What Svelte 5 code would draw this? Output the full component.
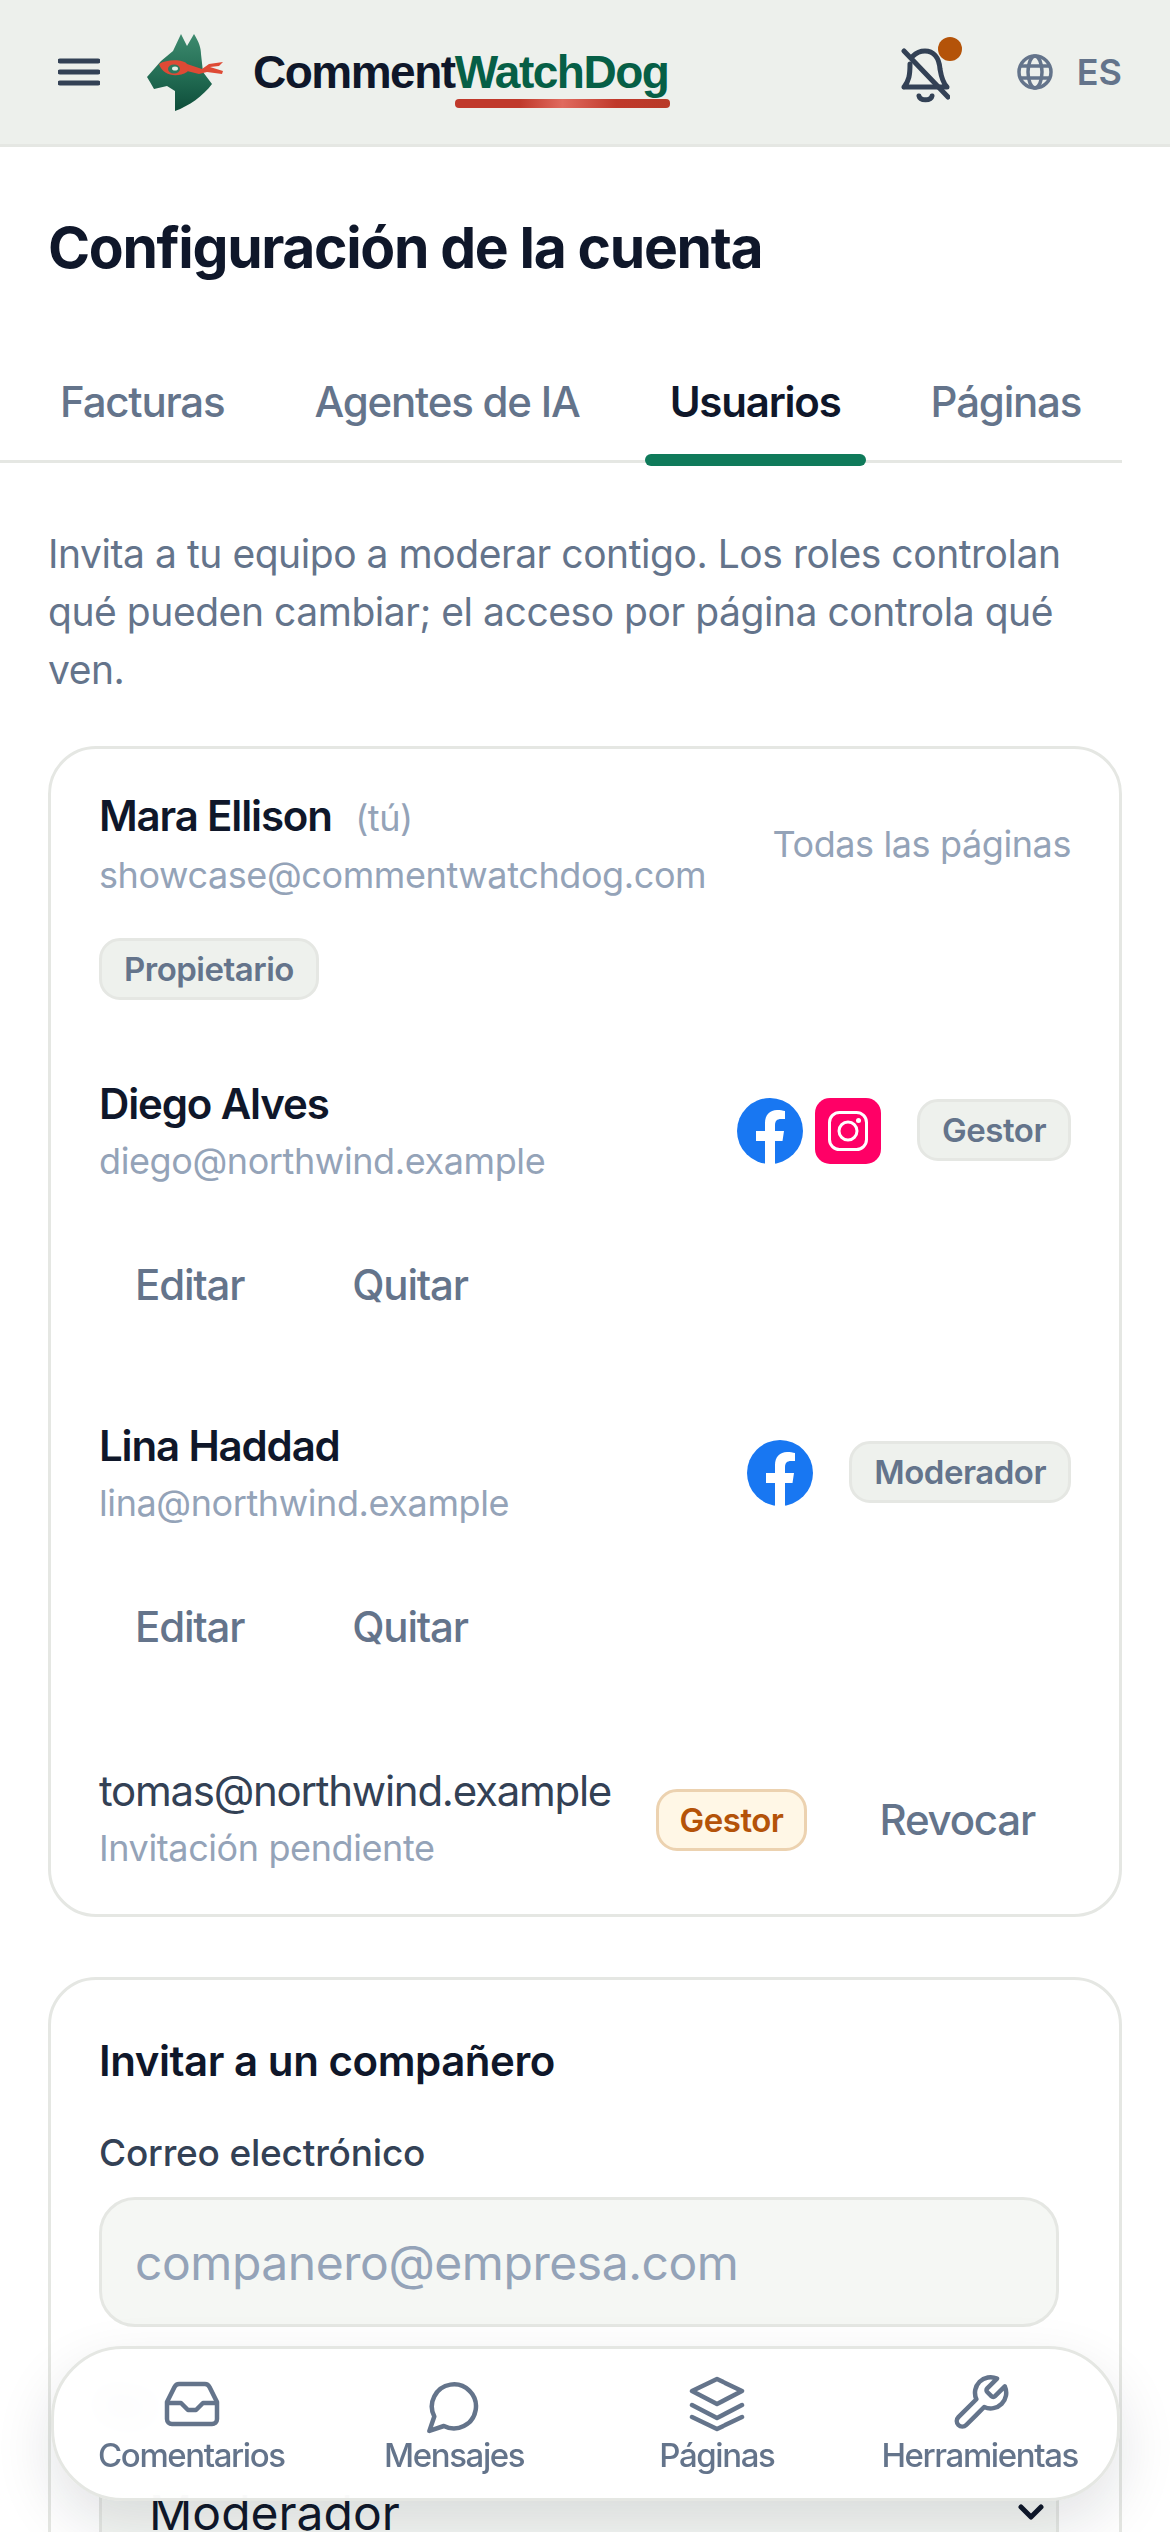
<script>
  const tabs = ['Facturas', 'Agentes de IA', 'Usuarios', 'Páginas']
  const members = [
    { name: 'Diego Alves', email: 'diego@northwind.example', pages: ['fb', 'ig'], role: 'Gestor' },
    { name: 'Lina Haddad', email: 'lina@northwind.example', pages: ['fb'], role: 'Moderador' }
  ]
  const nav = ['Comentarios', 'Mensajes', 'Páginas', 'Herramientas']
</script>

{#snippet fb()}
  <svg class="page-icon" viewBox="0 0 66 66">
    <circle cx="33" cy="33" r="33" fill="#1877f2"/>
    <path d="M28 66V43h-9V33h9v-8c0-8 5-13 12-13 3 0 6 .5 8 1v8h-4c-4 0-6 2-6 6v6h9l-1.500 10H38v23z" fill="#fff"/>
  </svg>
{/snippet}

{#snippet ig()}
  <svg class="page-icon" viewBox="0 0 66 66">
    <rect width="66" height="66" rx="15" fill="#ff0066"/>
    <rect x="14.500" y="14.500" width="37" height="37" rx="10" fill="none" stroke="#fff" stroke-width="3"/>
    <circle cx="33" cy="33" r="9" fill="none" stroke="#fff" stroke-width="3"/>
    <circle cx="43.500" cy="22.500" r="2.500" fill="#fff"/>
  </svg>
{/snippet}

<div class="page">
  <header>
    <button class="menu" aria-label="Menú">
      <svg viewBox="0 0 42 28" width="42" height="28"><path d="M2 3h38M2 14h38M2 25h38" stroke="#334155" stroke-width="5" stroke-linecap="round"/></svg>
    </button>
    <svg class="dog" viewBox="0 0 78 77" width="78" height="77">
      <defs>
        <linearGradient id="dogfill" x1="0" y1="0" x2="0" y2="1">
          <stop offset="0" stop-color="#3d8a6e"/><stop offset="0.55" stop-color="#226c53"/><stop offset="1" stop-color="#0e4d3a"/>
        </linearGradient>
      </defs>
      <path d="M0 43 14 27 26 17 34 0l6 12 7-12c5 8 7 14 7 20l2 18 9 12C56 62 42 72 28 77V57l-8-5-13 3-4-7z" fill="url(#dogfill)"/>
      <path d="M40 30 55 35l7-5 14-2-4 4-9 1 13 4-1 3-15-2-8 2-12-3z" fill="#de4a35"/>
      <path d="M12 30c8-5 24-5 28 0 2 4 2 6 0 8-10 6-24 4-28-8z" fill="#de4a35"/>
      <ellipse cx="27" cy="35" rx="6" ry="4.500" fill="#2c7a5f"/>
      <ellipse cx="28" cy="34.500" rx="3" ry="2" fill="#dfeee5"/>
    </svg>
    <div class="brand">
      <span class="word"><span class="comment">Comment</span><span class="watch">WatchDog</span></span>
    </div>
    <div class="spacer"></div>
    <span class="bell">
      <svg viewBox="0 0 50 58" width="50" height="58" fill="none" stroke="#334155" stroke-width="5" stroke-linecap="round" stroke-linejoin="round">
        <path d="M4 40H47C42 35 41 28 40 22 39 10 33 4 25 4 20 4 16 6 13 9M10 17C10 28 9 34 4 40"/>
        <path d="M4 4 48 50"/>
        <path d="M19 49C20 54 31 54 32 49"/>
      </svg>
      <i class="dot"></i>
    </span>
    <svg class="globe" viewBox="0 0 36 36" width="36" height="36" fill="none" stroke="#64748b" stroke-width="3.500">
      <circle cx="18" cy="18" r="16"/>
      <ellipse cx="18" cy="18" rx="7" ry="16"/>
      <path d="M4 12h28M4 24h28"/>
    </svg>
    <span class="lang">ES</span>
  </header>

  <main>
    <h1>Configuración de la cuenta</h1>

    <nav class="tabs">
      {#each tabs as tab}
        <span class="tab" class:active={tab === 'Usuarios'}>{tab}</span>
      {/each}
    </nav>

    <p class="intro">Invita a tu equipo a moderar contigo. Los roles controlan qué pueden cambiar; el acceso por página controla qué ven.</p>

    <section class="card users">
      <div class="owner">
        <div class="owner-top">
          <div>
            <div class="name">Mara Ellison <span class="you">(tú)</span></div>
            <div class="mail">showcase@commentwatchdog.com</div>
          </div>
          <span class="all">Todas las páginas</span>
        </div>
        <span class="badge">Propietario</span>
      </div>

      {#each members as m}
        <div class="member">
          <div class="member-top">
            <div class="who">
              <div class="name">{m.name}</div>
              <div class="mail">{m.email}</div>
            </div>
            <div class="pages">
              {#each m.pages as p}
                {#if p === 'fb'}{@render fb()}{:else}{@render ig()}{/if}
              {/each}
            </div>
            <span class="badge">{m.role}</span>
          </div>
          <div class="actions">
            <button>Editar</button>
            <button>Quitar</button>
          </div>
        </div>
      {/each}

      <div class="pending">
        <div class="who">
          <div class="pending-mail">tomas@northwind.example</div>
          <div class="mail">Invitación pendiente</div>
        </div>
        <span class="badge warn">Gestor</span>
        <button>Revocar</button>
      </div>
    </section>

    <section class="card invite">
      <h2>Invitar a un compañero</h2>
      <label for="mail">Correo electrónico</label>
      <input id="mail" placeholder="companero@empresa.com">
      <div class="field-label">Rol</div>
      <div class="select">
        <span>Moderador</span>
        <svg viewBox="0 0 26 18" width="26" height="18" fill="none" stroke="#0f172a" stroke-width="5" stroke-linecap="round" stroke-linejoin="round"><path d="M3 4l10 10 10-10"/></svg>
      </div>
    </section>
  </main>

  <nav class="bottom">
    {#each nav as item, i}
      <div class="nav-item">
        <svg viewBox="0 0 62 62" width="62" height="62" fill="none" stroke="#64748b" stroke-width="4.500" stroke-linecap="round" stroke-linejoin="round">
          {#if i === 0}
            <g transform="translate(5 9)">
              <path d="M14 2h26c2 0 3.500 1 4.500 3L52 20v17a5 5 0 0 1-5 5H7a5 5 0 0 1-5-5V20L9.500 5C10.500 3 12 2 14 2z"/>
              <path d="M3 21H16l7 7h8l7-7H51"/>
            </g>
          {:else if i === 1}
            <path transform="translate(1.500 4) scale(2.450)" stroke-width="1.840" d="M7.900 20A9 9 0 1 0 4 16.100L2 22Z"/>
          {:else if i === 2}
            <g transform="translate(4 4)">
              <path d="M27 2 52 14 27 27 2 14z"/>
              <path d="M2 28 27 41 52 28"/>
              <path d="M2 40 27 52 52 40"/>
            </g>
          {:else}
            <path transform="translate(0 -1) scale(2.600)" stroke-width="1.730" d="M14.700 6.300a1 1 0 0 0 0 1.400l1.600 1.600a1 1 0 0 0 1.400 0l3.770-3.770a6 6 0 0 1-7.940 7.940l-6.910 6.910a2.120 2.120 0 0 1-3-3l6.910-6.910a6 6 0 0 1 7.940-7.940l-3.760 3.760z"/>
          {/if}
        </svg>
        <span>{item}</span>
      </div>
    {/each}
  </nav>
</div>

<style>
  :global(body) {
    background: #fff;
    font-family: Inter, "Noto Sans", sans-serif;
  }

  .page {
    height: 2532px;
    overflow: hidden;
    color: #0f172a;
  }

  button {
    font: inherit;
    background: none;
    border: 0;
    color: #64748b;
    font-size: 42px;
    font-weight: 500;
    letter-spacing: -1.200px;
    padding: 0 36px;
    cursor: pointer;
  }

  header {
    display: flex;
    align-items: center;
    height: 144px;
    padding: 0 48px;
    background: #edf0ec;
    border-bottom: 3px solid #e5e7e3;
  }

  .menu {
    display: flex;
    padding: 0 10px;
  }

  .dog { margin-left: 37px; }

  .brand {
    margin-left: 28px;
    display: flex;
    align-items: center;
  }

  .word {
    font-family: "Liberation Sans", Arial, sans-serif;
    font-weight: 700;
    font-size: 46px;
    letter-spacing: -1.500px;
  }

  .comment { color: #0f172a; }

  .watch {
    color: #065f46;
    position: relative;
    display: inline-block;
  }

  .watch::after {
    content: '';
    position: absolute;
    left: 0;
    right: -2px;
    bottom: -9px;
    height: 9px;
    border-radius: 4px;
    background: linear-gradient(90deg, #c0392b, #c0392b 30%, #e06a5e 50%, #c0392b 75%, #b83a28);
  }

  .spacer { flex: 1; }

  .bell {
    position: relative;
    display: flex;
    margin-right: 67px;
    margin-top: 8px;
  }

  .dot {
    position: absolute;
    top: -10px;
    right: -12px;
    width: 24px;
    height: 24px;
    border-radius: 50%;
    background: #b45309;
  }

  .lang {
    margin-left: 24px;
    font-size: 36px;
    font-weight: 600;
    color: #64748b;
  }

  main { padding-top: 65px; }

  h1 {
    margin: 0 48px;
    font-size: 57px;
    font-weight: 700;
    line-height: 72px;
    letter-spacing: -1.350px;
  }

  .tabs {
    display: flex;
    gap: 66px;
    margin: 76px 48px 0 0;
    padding-left: 48px;
    border-bottom: 3px solid #e5e7e3;
  }

  .tab {
    position: relative;
    padding: 0 12px;
    height: 100px;
    line-height: 84px;
    font-size: 42px;
    font-weight: 500;
    letter-spacing: -1.200px;
    color: #64748b;
    white-space: nowrap;
  }

  .tab.active {
    color: #0f172a;
    font-weight: 600;
  }

  .tab.active::after {
    content: '';
    position: absolute;
    left: -13px;
    right: -13px;
    bottom: -6px;
    height: 12px;
    border-radius: 6px;
    background: #0f7a5a;
  }

  .intro {
    margin: 62px 48px 47px;
    font-size: 39px;
    line-height: 58px;
    letter-spacing: -0.450px;
    color: #64748b;
  }

  .card {
    margin: 0 48px;
    border: 3px solid #e5e7e3;
    border-radius: 48px;
    background: #fff;
    padding: 0 48px;
  }

  .users { padding: 40px 48px 39px; }

  .owner-top, .member-top, .pending {
    display: flex;
    align-items: center;
  }

  .owner-top { justify-content: space-between; }

  .name {
    font-size: 42px;
    font-weight: 600;
    line-height: 54px;
    letter-spacing: -1.150px;
    color: #0f172a;
  }

  .you {
    margin-left: 14px;
    font-size: 36px;
    font-weight: 400;
    letter-spacing: -0.500px;
    color: #94a3b8;
  }

  .mail {
    margin-top: 3px;
    font-size: 36px;
    line-height: 54px;
    letter-spacing: -0.400px;
    color: #94a3b8;
  }

  .all {
    margin-bottom: 3px;
    font-size: 36px;
    letter-spacing: -0.400px;
    color: #94a3b8;
  }

  .badge {
    display: inline-block;
    box-sizing: border-box;
    height: 62px;
    line-height: 56px;
    padding: 0 22px;
    border: 3px solid #e5e7e3;
    border-radius: 21px;
    background: #eef1ed;
    color: #64748b;
    font-size: 33px;
    font-weight: 600;
    letter-spacing: -0.500px;
  }

  .owner .badge { margin-top: 36px; }

  .member { margin-top: 77px; }
  .member + .member { margin-top: 107px; }

  .who { flex: 1; }

  .pages {
    display: flex;
    gap: 12px;
    margin-right: 36px;
    margin-bottom: 4px;
  }

  .member-top .badge { margin-bottom: 6px; }

  .page-icon { width: 66px; height: 66px; display: block; }

  .actions {
    display: flex;
    gap: 36px;
    margin-top: 70px;
    line-height: 54px;
  }

  .pending { margin-top: 110px; }

  .pending-mail {
    font-size: 42px;
    line-height: 54px;
    letter-spacing: -1.260px;
    color: #334155;
  }

  .badge.warn {
    padding: 0 21px;
    background: #fff7e6;
    border-color: #ecd2b0;
    color: #b45309;
    margin-right: 36px;
  }

  .invite {
    margin-top: 60px;
    padding-top: 54px;
    height: 900px;
  }

  h2 {
    margin: 0;
    font-size: 42px;
    font-weight: 600;
    line-height: 54px;
    letter-spacing: -0.450px;
  }

  label, .field-label {
    display: block;
    margin-top: 38px;
    font-size: 37px;
    font-weight: 500;
    line-height: 54px;
    letter-spacing: -0.200px;
    color: #334155;
  }

  .field-label { margin-top: 52px; }

  input {
    display: block;
    box-sizing: border-box;
    width: 960px;
    height: 130px;
    margin-top: 17px;
    padding: 0 33px;
    border: 3px solid #e5e7e3;
    border-radius: 36px;
    background: #f5f7f4;
    font: inherit;
    font-size: 48px;
    letter-spacing: -0.450px;
  }

  input::placeholder { color: #94a3b8; }

  .select {
    display: flex;
    align-items: center;
    justify-content: space-between;
    box-sizing: border-box;
    width: 960px;
    height: 130px;
    margin-top: 14px;
    padding: 0 12px 0 47px;
    border: 3px solid #e5e7e3;
    border-radius: 36px;
    background: #f5f7f4;
    font-size: 48px;
  }

  .bottom {
    position: fixed;
    left: 51px;
    top: 2346px;
    width: 1069px;
    height: 155px;
    box-sizing: border-box;
    display: grid;
    grid-template-columns: repeat(4, 1fr);
    padding: 24px 6px 0;
    border: 3px solid #e5e7e3;
    border-radius: 72px;
    background: rgba(255, 255, 255, 0.95);
    backdrop-filter: blur(16px);
    box-shadow: 0 24px 60px rgba(15, 23, 42, 0.12);
  }

  .nav-item {
    display: flex;
    flex-direction: column;
    align-items: center;
    color: #64748b;
    font-size: 33px;
    font-weight: 500;
    letter-spacing: -1.400px;
  }

  .nav-item span { line-height: 40px; }
</style>
